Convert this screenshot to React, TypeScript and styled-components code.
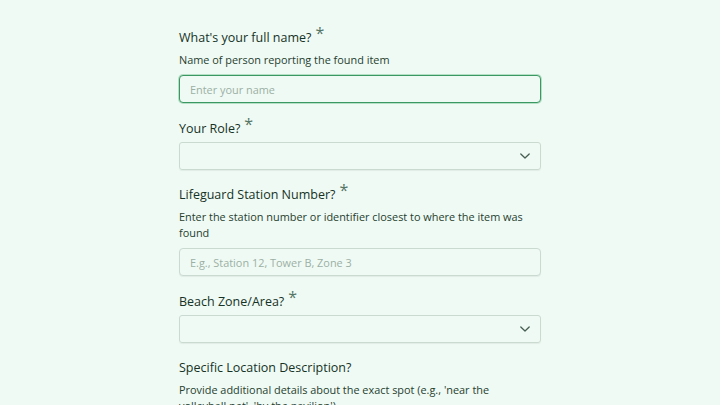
import React from 'react';
import styled, { createGlobalStyle } from 'styled-components';

const GlobalStyle = createGlobalStyle`
  html, body {
    margin: 0;
    padding: 0;
    background: #effaf4;
  }
  body {
    font-family: "Open Sans", "Noto Sans", sans-serif;
    color: #183428;
  }
`;

const Page = styled.div`
  width: 362px;
  margin: 0 auto;
  padding-top: 30px;
  display: flex;
  flex-direction: column;
  gap: 17.5px;
`;

const Field = styled.div`
  display: flex;
  flex-direction: column;
`;

const Label = styled.label`
  font-size: 12.5px;
  line-height: 16px;
  font-weight: 500;
  color: #163226;
  margin-bottom: 5px;
`;

const Required = styled.span`
  font-size: 16px;
  font-weight: 400;
  color: #557564;
  margin-left: 4px;
  position: relative;
  top: -3px;
  line-height: 0;
`;

const Hint = styled.p`
  margin: 1px 0 7px;
  padding-right: 8px;
  font-size: 10.9px;
  line-height: 16px;
  color: #26402f;
`;

const Input = styled.input<{ $focused?: boolean }>`
  box-sizing: border-box;
  height: 28px;
  width: 100%;
  padding: 0 10px;
  border-radius: 4px;
  font-family: inherit;
  font-size: 10.9px;
  color: #183428;
  background: #effaf4;
  border: ${p => (p.$focused ? '1.5px solid #3b9863' : '1px solid #cbdad1')};
  box-shadow: ${p => (p.$focused ? '0 0 0 1px #b6e0c6' : '0 1px 1px rgba(30, 60, 45, 0.07)')};
  outline: none;

  &::placeholder {
    color: #9cb0a4;
  }
`;

const SelectBox = styled.div`
  box-sizing: border-box;
  height: 28px;
  width: 100%;
  border: 1px solid #cbdad1;
  border-radius: 3px;
  box-shadow: 0 1px 1px rgba(30, 60, 45, 0.07);
  display: flex;
  align-items: center;
  justify-content: flex-end;
  padding-right: 9px;
`;

const Chevron = () => (
  <svg width="12" height="12" viewBox="0 0 12 12" fill="none">
    <path d="M1.8 4 L6 8 L10.2 4" stroke="#465f52" strokeWidth="1.3" strokeLinecap="round" strokeLinejoin="round" />
  </svg>
);

function App() {
  return (
    <>
      <GlobalStyle />
      <Page>
        <Field>
          <Label>What's your full name?<Required>*</Required></Label>
          <Hint>Name of person reporting the found item</Hint>
          <Input $focused placeholder="Enter your name" />
        </Field>
        <Field>
          <Label>Your Role?<Required>*</Required></Label>
          <SelectBox><Chevron /></SelectBox>
        </Field>
        <Field>
          <Label>Lifeguard Station Number?<Required>*</Required></Label>
          <Hint>Enter the station number or identifier closest to where the item was found</Hint>
          <Input placeholder="E.g., Station 12, Tower B, Zone 3" />
        </Field>
        <Field>
          <Label>Beach Zone/Area?<Required>*</Required></Label>
          <SelectBox><Chevron /></SelectBox>
        </Field>
        <Field>
          <Label>Specific Location Description?</Label>
          <Hint>Provide additional details about the exact spot (e.g., 'near the volleyball net', 'by the pavilion')</Hint>
        </Field>
      </Page>
    </>
  );
}

export default App;
